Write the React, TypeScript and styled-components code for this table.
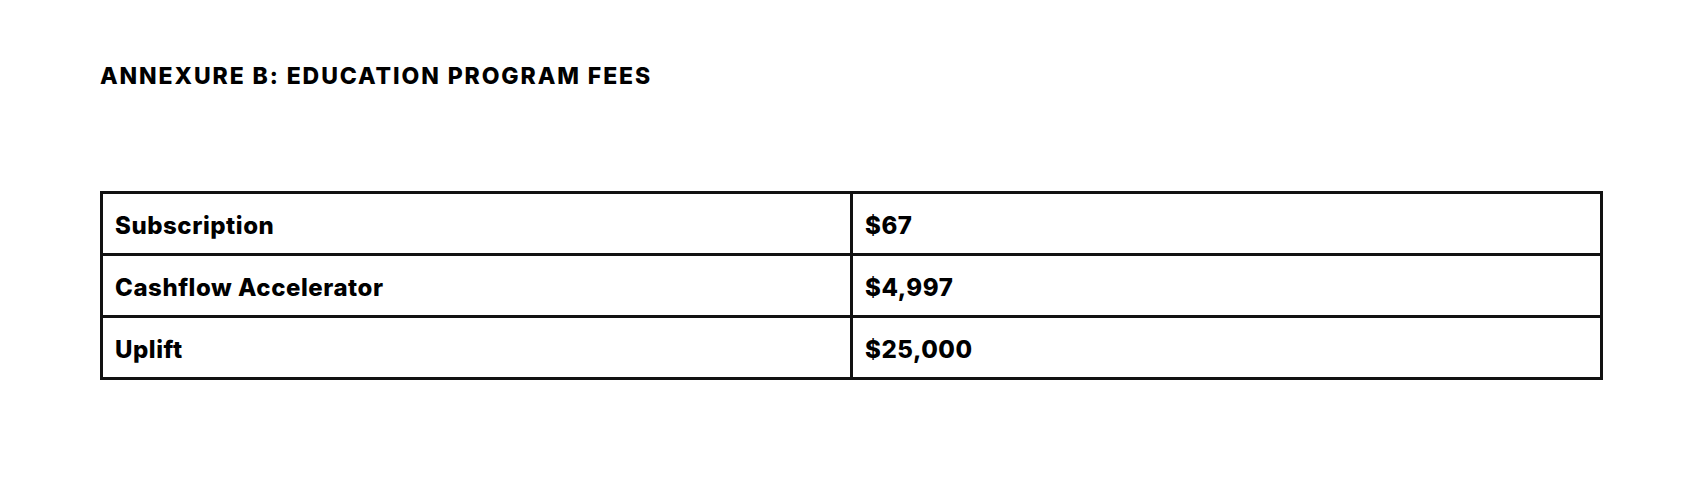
import React, {FC} from 'react'
import styled, {createGlobalStyle} from 'styled-components'

const GlobalStyle = createGlobalStyle`
  html, body {
    margin: 0;
    padding: 0;
    background: #ffffff;
  }
  body {
    font-family: Inter, "Liberation Sans", Arial, sans-serif;
    color: #000;
  }
`

const Page = styled.main`
  padding: 63px 97px 0 100px;
`

const Heading = styled.h2`
  font-size: 23px;
  font-weight: 800;
  letter-spacing: 1.9px;
  line-height: 26px;
  margin: 0 0 102px;
`

const Table = styled.table`
  border-collapse: collapse;
  width: 100%;
  table-layout: fixed;
`

const Cell = styled.td`
  border: 3px solid #111;
  font-size: 24px;
  font-weight: 800;
  letter-spacing: 0.55px;
  line-height: 27px;
  padding: 18px 12px 14px;
`

interface Fee {
  name: string
  price: string
}

const fees: Fee[] = [
  {name: 'Subscription', price: '$67'},
  {name: 'Cashflow Accelerator', price: '$4,997'},
  {name: 'Uplift', price: '$25,000'},
]

const App: FC = () => (
  <>
    <GlobalStyle/>
    <Page>
      <Heading>ANNEXURE B: EDUCATION PROGRAM FEES</Heading>
      <Table>
        <tbody>
          {fees.map(fee => (
            <tr key={fee.name}>
              <Cell>{fee.name}</Cell>
              <Cell>{fee.price}</Cell>
            </tr>
          ))}
        </tbody>
      </Table>
    </Page>
  </>
)

export default App
